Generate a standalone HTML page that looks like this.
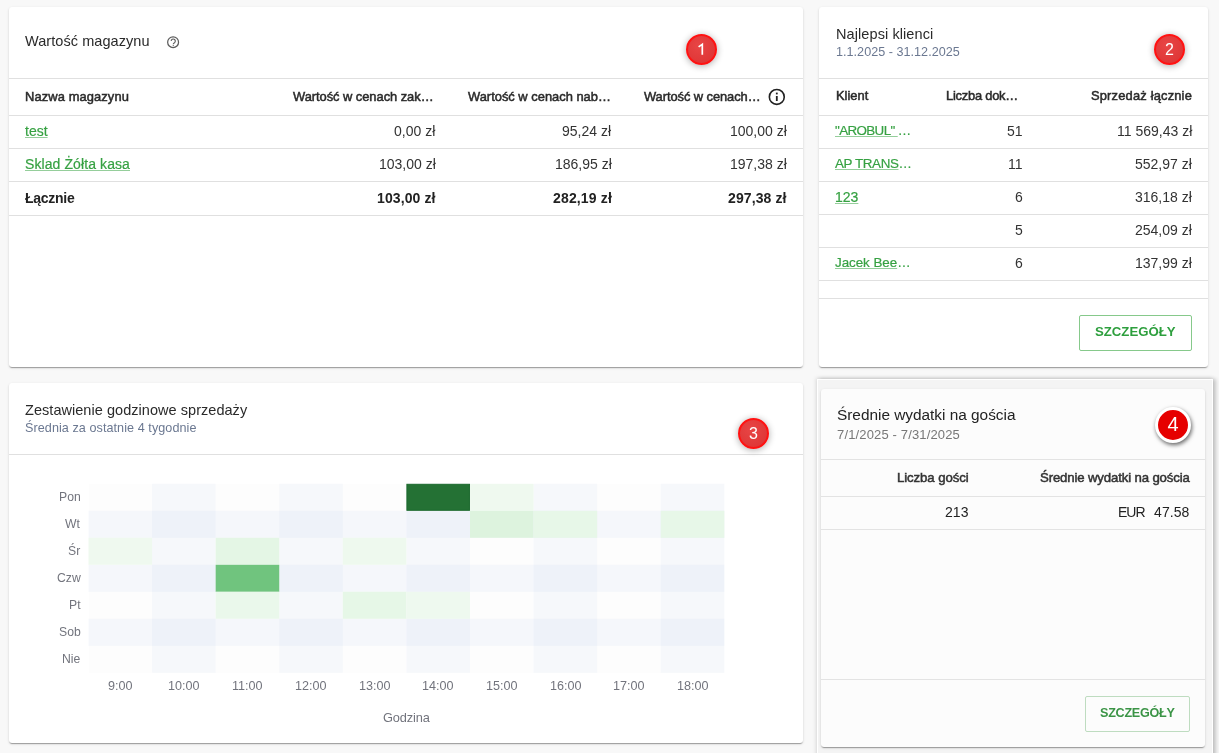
<!DOCTYPE html>
<html><head><meta charset="utf-8"><style>
html,body{margin:0;padding:0}
body{width:1219px;height:753px;overflow:hidden;background:#f8f8f8;position:relative;font-family:'Liberation Sans', sans-serif}
.card{position:absolute;background:#fff;border-radius:3px;box-shadow:0 2px 1px -1px rgba(0,0,0,.2),0 1px 1px 0 rgba(0,0,0,.14),0 1px 3px 0 rgba(0,0,0,.12)}
.tx{position:absolute;white-space:pre;will-change:transform}
.lk{text-decoration:underline;text-decoration-color:rgba(62,165,72,.55);text-underline-offset:1px;text-decoration-thickness:1px}
.hl{position:absolute;height:1px}
.hc{position:absolute}
.bd{position:absolute;border-radius:50%;background:radial-gradient(circle at 40% 35%,#e84545,#dc3232);border:2px solid #ff1212;box-sizing:border-box;box-shadow:0 1px 7px rgba(0,0,0,.33);color:#fff;font-size:16px;text-align:center}
.bd span{position:absolute;left:0;right:0;top:50%;transform:translateY(-50%);will-change:transform;line-height:16px;margin-top:0.5px}
.btn{position:absolute;box-sizing:border-box;border:1px solid #86c98b;border-radius:2px}
</style></head><body>
<div class="card" style="left:9px;top:7px;width:794px;height:360px"></div>
<div class="card" style="left:819px;top:7px;width:389px;height:360px"></div>
<div class="card" style="left:9px;top:383px;width:794px;height:360px"></div>
<div style="position:absolute;left:817px;top:379px;width:396px;height:380px;background:#f4f4f4;border:1px solid #fff;border-bottom:0;box-sizing:border-box;box-shadow:-1px -1px 4px rgba(0,0,0,.13),3px 0 4px rgba(0,0,0,.2)"></div>
<div class="card" style="left:821px;top:389px;width:384px;height:358px;background:#fcfcfc"></div>
<div class="hl" style="left:9px;top:78px;width:794px;background:#e0e0e0"></div><div class="hl" style="left:9px;top:115px;width:794px;background:#e0e0e0"></div><div class="hl" style="left:9px;top:148px;width:794px;background:#e0e0e0"></div><div class="hl" style="left:9px;top:181px;width:794px;background:#e0e0e0"></div><div class="hl" style="left:9px;top:215px;width:794px;background:#e0e0e0"></div><div class="hl" style="left:819px;top:78px;width:389px;background:#e0e0e0"></div><div class="hl" style="left:819px;top:115px;width:389px;background:#e0e0e0"></div><div class="hl" style="left:819px;top:148px;width:389px;background:#e0e0e0"></div><div class="hl" style="left:819px;top:181px;width:389px;background:#e0e0e0"></div><div class="hl" style="left:819px;top:214px;width:389px;background:#e0e0e0"></div><div class="hl" style="left:819px;top:247px;width:389px;background:#e0e0e0"></div><div class="hl" style="left:819px;top:280px;width:389px;background:#e0e0e0"></div><div class="hl" style="left:819px;top:298px;width:389px;background:#e0e0e0"></div><div class="hl" style="left:9px;top:454px;width:794px;background:#e0e0e0"></div><div class="hl" style="left:821px;top:459px;width:384px;background:#e3e3e3"></div><div class="hl" style="left:821px;top:496px;width:384px;background:#e3e3e3"></div><div class="hl" style="left:821px;top:529px;width:384px;background:#e3e3e3"></div><div class="hl" style="left:821px;top:679px;width:384px;background:#e3e3e3"></div>
<svg style="position:absolute;left:0;top:0" width="1219" height="753"><rect x="88.50" y="483.8" width="63.58" height="189.00" fill="rgb(250,250,250)" fill-opacity="0.2"/><rect x="152.08" y="483.8" width="63.58" height="189.00" fill="rgb(210,219,238)" fill-opacity="0.2"/><rect x="215.66" y="483.8" width="63.58" height="189.00" fill="rgb(250,250,250)" fill-opacity="0.2"/><rect x="279.24" y="483.8" width="63.58" height="189.00" fill="rgb(210,219,238)" fill-opacity="0.2"/><rect x="342.82" y="483.8" width="63.58" height="189.00" fill="rgb(250,250,250)" fill-opacity="0.2"/><rect x="406.40" y="483.8" width="63.58" height="189.00" fill="rgb(210,219,238)" fill-opacity="0.2"/><rect x="469.98" y="483.8" width="63.58" height="189.00" fill="rgb(250,250,250)" fill-opacity="0.2"/><rect x="533.56" y="483.8" width="63.58" height="189.00" fill="rgb(210,219,238)" fill-opacity="0.2"/><rect x="597.14" y="483.8" width="63.58" height="189.00" fill="rgb(250,250,250)" fill-opacity="0.2"/><rect x="660.72" y="483.8" width="63.58" height="189.00" fill="rgb(210,219,238)" fill-opacity="0.2"/><rect x="88.5" y="483.80" width="635.80" height="27.00" fill="rgb(250,250,250)" fill-opacity="0.2"/><rect x="88.5" y="510.80" width="635.80" height="27.00" fill="rgb(210,219,238)" fill-opacity="0.2"/><rect x="88.5" y="537.80" width="635.80" height="27.00" fill="rgb(250,250,250)" fill-opacity="0.2"/><rect x="88.5" y="564.80" width="635.80" height="27.00" fill="rgb(210,219,238)" fill-opacity="0.2"/><rect x="88.5" y="591.80" width="635.80" height="27.00" fill="rgb(250,250,250)" fill-opacity="0.2"/><rect x="88.5" y="618.80" width="635.80" height="27.00" fill="rgb(210,219,238)" fill-opacity="0.2"/><rect x="88.5" y="645.80" width="635.80" height="27.00" fill="rgb(250,250,250)" fill-opacity="0.2"/><rect x="406.90" y="484.30" width="62.58" height="26.00" fill="#247134" stroke="#1c6a2d" stroke-width="1"/><rect x="469.98" y="483.80" width="63.58" height="27.00" fill="#eff9ef"/><rect x="469.98" y="510.80" width="63.58" height="27.00" fill="#ddf3de"/><rect x="533.56" y="510.80" width="63.58" height="27.00" fill="#e7f7e8"/><rect x="660.72" y="510.80" width="63.58" height="27.00" fill="#e7f7e8"/><rect x="88.50" y="537.80" width="63.58" height="27.00" fill="#eff9ef"/><rect x="215.66" y="537.80" width="63.58" height="27.00" fill="#e4f6e5"/><rect x="342.82" y="537.80" width="63.58" height="27.00" fill="#eef9ee"/><rect x="215.66" y="564.80" width="63.58" height="27.00" fill="#70c47e"/><rect x="215.66" y="591.80" width="63.58" height="27.00" fill="#eaf8eb"/><rect x="342.82" y="591.80" width="63.58" height="27.00" fill="#e6f7e7"/><rect x="406.40" y="591.80" width="63.58" height="27.00" fill="#eef9ef"/></svg>

<svg style="position:absolute;left:0;top:0" width="1219" height="753">
<circle cx="173.1" cy="42.2" r="5.45" fill="none" stroke="#5c5c5c" stroke-width="1.25"/>
<path d="M171.2 41.1 A2.05 2.05 0 1 1 174.5 42.7 C173.7 43.2 173.25 43.5 173.25 44.3" fill="none" stroke="#5c5c5c" stroke-width="1.15"/>
<circle cx="173.25" cy="45.6" r="0.65" fill="#5c5c5c"/>
<circle cx="776.8" cy="96.9" r="7.45" fill="none" stroke="#222" stroke-width="1.6"/>
<rect x="775.9" y="92.6" width="1.8" height="1.8" fill="#222"/>
<rect x="775.9" y="96" width="1.8" height="5" fill="#222"/>
</svg>
<div class="btn" style="left:1079px;top:315px;width:113px;height:36px"></div>
<div class="btn" style="left:1085px;top:696px;width:105px;height:35.5px;border-color:#bedcc0"></div>
<div class="bd" style="left:685.5px;top:33.5px;width:31px;height:31px"><svg style="position:absolute;left:-2px;top:-2px" width="31" height="31"><path d="M12.6 12.9 L16.3 10.3 L16.3 20.8" fill="none" stroke="#fff" stroke-width="1.7"/></svg></div>
<div class="bd" style="left:1153.5px;top:33.5px;width:31px;height:31px"><span>2</span></div>
<div class="bd" style="left:737.5px;top:417.5px;width:31px;height:31px"><span>3</span></div>
<div class="bd" style="left:1155px;top:407px;width:36px;height:36px;background:#e60000;border:3.5px solid #fff;box-shadow:1px 2px 4px rgba(0,0,0,.6)"><span style="font-size:20px;line-height:20px;margin-top:-1.5px">4</span></div>
<div class="tx" style="left:25.00px;top:32.68px;font-size:14.5px;line-height:17.40px;color:#2a2a2a;letter-spacing:0.059px;">Wartość magazynu</div><div class="tx" style="left:25.00px;top:88.89px;font-size:12.9px;line-height:15.48px;color:#2a2a2a;-webkit-text-stroke:0.5px currentColor;letter-spacing:0.109px;">Nazwa magazynu</div><div class="tx" style="left:293.00px;top:88.89px;font-size:12.9px;line-height:15.48px;color:#2a2a2a;-webkit-text-stroke:0.5px currentColor;letter-spacing:-0.042px;">Wartość w cenach zak…</div><div class="tx" style="left:468.00px;top:88.89px;font-size:12.9px;line-height:15.48px;color:#2a2a2a;-webkit-text-stroke:0.5px currentColor;">Wartość w cenach nab…</div><div class="tx" style="left:644.00px;top:88.89px;font-size:12.9px;line-height:15.48px;color:#2a2a2a;-webkit-text-stroke:0.5px currentColor;letter-spacing:-0.073px;">Wartość w cenach…</div><div class="tx" style="left:25.00px;top:122.65px;font-size:14px;line-height:16.80px;color:#36a142;-webkit-text-stroke:0.2px currentColor;"><span class="lk">test</span></div><div class="tx" style="left:25.00px;top:155.55px;font-size:14px;line-height:16.80px;color:#36a142;-webkit-text-stroke:0.2px currentColor;letter-spacing:0.094px;"><span class="lk">Sklad Żółta kasa</span></div><div class="tx" style="left:25.00px;top:189.55px;font-size:14px;line-height:16.80px;color:#222;font-weight:700;letter-spacing:-0.266px;">Łącznie</div><div class="tx" style="left:394.25px;top:122.65px;font-size:14px;line-height:16.80px;color:#333;">0,00 zł</div><div class="tx" style="left:562.45px;top:122.65px;font-size:14px;line-height:16.80px;color:#333;">95,24 zł</div><div class="tx" style="left:729.67px;top:122.65px;font-size:14px;line-height:16.80px;color:#333;">100,00 zł</div><div class="tx" style="left:378.67px;top:155.55px;font-size:14px;line-height:16.80px;color:#333;">103,00 zł</div><div class="tx" style="left:554.67px;top:155.55px;font-size:14px;line-height:16.80px;color:#333;">186,95 zł</div><div class="tx" style="left:729.67px;top:155.55px;font-size:14px;line-height:16.80px;color:#333;">197,38 zł</div><div class="tx" style="left:377.00px;top:189.55px;font-size:14px;line-height:16.80px;color:#222;font-weight:700;letter-spacing:0.099px;">103,00 zł</div><div class="tx" style="left:552.50px;top:189.55px;font-size:14px;line-height:16.80px;color:#222;font-weight:700;letter-spacing:0.155px;">282,19 zł</div><div class="tx" style="left:728.00px;top:189.55px;font-size:14px;line-height:16.80px;color:#222;font-weight:700;letter-spacing:0.099px;">297,38 zł</div><div class="tx" style="left:835.70px;top:25.68px;font-size:14.5px;line-height:17.40px;color:#2a2a2a;letter-spacing:0.087px;">Najlepsi klienci</div><div class="tx" style="left:835.70px;top:44.97px;font-size:12.6px;line-height:15.12px;color:#6b7891;letter-spacing:0.026px;">1.1.2025 - 31.12.2025</div><div class="tx" style="left:835.50px;top:88.39px;font-size:12.9px;line-height:15.48px;color:#2a2a2a;-webkit-text-stroke:0.5px currentColor;">Klient</div><div class="tx" style="left:946.00px;top:88.39px;font-size:12.9px;line-height:15.48px;color:#2a2a2a;-webkit-text-stroke:0.5px currentColor;letter-spacing:-0.230px;">Liczba dok…</div><div class="tx" style="left:1091.30px;top:88.39px;font-size:12.9px;line-height:15.48px;color:#2a2a2a;-webkit-text-stroke:0.5px currentColor;letter-spacing:0.177px;">Sprzedaż łącznie</div><div class="tx" style="left:835.30px;top:123.12px;font-size:13.4px;line-height:16.08px;color:#36a142;-webkit-text-stroke:0.2px currentColor;letter-spacing:-0.619px;"><span class="lk">"AROBUL" </span>…</div><div class="tx" style="left:1006.92px;top:122.55px;font-size:14px;line-height:16.80px;color:#333;">51</div><div class="tx" style="left:1117.05px;top:122.55px;font-size:14px;line-height:16.80px;color:#333;">11 569,43 zł</div><div class="tx" style="left:835.30px;top:156.12px;font-size:13.4px;line-height:16.08px;color:#36a142;-webkit-text-stroke:0.2px currentColor;letter-spacing:-0.375px;"><span class="lk">AP TRANS</span>…</div><div class="tx" style="left:1007.95px;top:155.55px;font-size:14px;line-height:16.80px;color:#333;">11</div><div class="tx" style="left:1135.47px;top:155.55px;font-size:14px;line-height:16.80px;color:#333;">552,97 zł</div><div class="tx" style="left:835.30px;top:188.55px;font-size:14px;line-height:16.80px;color:#36a142;-webkit-text-stroke:0.2px currentColor;"><span class="lk">123</span></div><div class="tx" style="left:1014.70px;top:188.55px;font-size:14px;line-height:16.80px;color:#333;">6</div><div class="tx" style="left:1135.47px;top:188.55px;font-size:14px;line-height:16.80px;color:#333;">316,18 zł</div><div class="tx" style="left:1014.70px;top:221.55px;font-size:14px;line-height:16.80px;color:#333;">5</div><div class="tx" style="left:1135.47px;top:221.55px;font-size:14px;line-height:16.80px;color:#333;">254,09 zł</div><div class="tx" style="left:835.30px;top:255.12px;font-size:13.4px;line-height:16.08px;color:#36a142;-webkit-text-stroke:0.2px currentColor;letter-spacing:-0.042px;"><span class="lk">Jacek Bee</span>…</div><div class="tx" style="left:1014.70px;top:254.55px;font-size:14px;line-height:16.80px;color:#333;">6</div><div class="tx" style="left:1135.47px;top:254.55px;font-size:14px;line-height:16.80px;color:#333;">137,99 zł</div><div class="tx" style="left:1095.35px;top:324.21px;font-size:13.2px;line-height:15.84px;color:#2e9f3e;font-weight:700;letter-spacing:-0.010px;">SZCZEGÓŁY</div><div class="tx" style="left:24.80px;top:401.88px;font-size:14.5px;line-height:17.40px;color:#2a2a2a;letter-spacing:0.044px;">Zestawienie godzinowe sprzedaży</div><div class="tx" style="left:25.00px;top:420.97px;font-size:12.6px;line-height:15.12px;color:#6b7891;letter-spacing:0.069px;">Średnia za ostatnie 4 tygodnie</div><div class="tx" style="left:58.61px;top:490.05px;font-size:12.2px;line-height:14.64px;color:#72747d;">Pon</div><div class="tx" style="left:65.41px;top:517.05px;font-size:12.2px;line-height:14.64px;color:#72747d;">Wt</div><div class="tx" style="left:68.11px;top:544.05px;font-size:12.2px;line-height:14.64px;color:#72747d;">Śr</div><div class="tx" style="left:56.60px;top:571.05px;font-size:12.2px;line-height:14.64px;color:#72747d;">Czw</div><div class="tx" style="left:68.78px;top:598.05px;font-size:12.2px;line-height:14.64px;color:#72747d;">Pt</div><div class="tx" style="left:58.61px;top:625.05px;font-size:12.2px;line-height:14.64px;color:#72747d;">Sob</div><div class="tx" style="left:62.00px;top:652.05px;font-size:12.2px;line-height:14.64px;color:#72747d;">Nie</div><div class="tx" style="left:108.03px;top:679.07px;font-size:12.6px;line-height:15.12px;color:#72747d;">9:00</div><div class="tx" style="left:168.11px;top:679.07px;font-size:12.6px;line-height:15.12px;color:#72747d;">10:00</div><div class="tx" style="left:232.15px;top:679.07px;font-size:12.6px;line-height:15.12px;color:#72747d;">11:00</div><div class="tx" style="left:295.27px;top:679.07px;font-size:12.6px;line-height:15.12px;color:#72747d;">12:00</div><div class="tx" style="left:358.85px;top:679.07px;font-size:12.6px;line-height:15.12px;color:#72747d;">13:00</div><div class="tx" style="left:422.43px;top:679.07px;font-size:12.6px;line-height:15.12px;color:#72747d;">14:00</div><div class="tx" style="left:486.01px;top:679.07px;font-size:12.6px;line-height:15.12px;color:#72747d;">15:00</div><div class="tx" style="left:549.59px;top:679.07px;font-size:12.6px;line-height:15.12px;color:#72747d;">16:00</div><div class="tx" style="left:613.17px;top:679.07px;font-size:12.6px;line-height:15.12px;color:#72747d;">17:00</div><div class="tx" style="left:676.75px;top:679.07px;font-size:12.6px;line-height:15.12px;color:#72747d;">18:00</div><div class="tx" style="left:383.10px;top:709.88px;font-size:12.8px;line-height:15.36px;color:#72747d;letter-spacing:-0.153px;">Godzina</div><div class="tx" style="left:836.50px;top:406.42px;font-size:15.4px;line-height:18.48px;color:#222;letter-spacing:-0.013px;filter:blur(0.35px);">Średnie wydatki na gościa</div><div class="tx" style="left:836.50px;top:426.70px;font-size:13px;line-height:15.60px;color:#777;letter-spacing:0.150px;filter:blur(0.35px);">7/1/2025 - 7/31/2025</div><div class="tx" style="left:897.00px;top:470.11px;font-size:13.2px;line-height:15.84px;color:#333;-webkit-text-stroke:0.5px currentColor;letter-spacing:-0.090px;filter:blur(0.35px);">Liczba gości</div><div class="tx" style="left:1039.50px;top:470.11px;font-size:13.2px;line-height:15.84px;color:#333;-webkit-text-stroke:0.5px currentColor;letter-spacing:-0.141px;filter:blur(0.35px);">Średnie wydatki na gościa</div><div class="tx" style="left:945.30px;top:504.45px;font-size:14px;line-height:16.80px;color:#222;letter-spacing:0.047px;filter:blur(0.35px);">213</div><div class="tx" style="left:1118.00px;top:504.45px;font-size:14px;line-height:16.80px;color:#222;letter-spacing:-1.021px;filter:blur(0.35px);">EUR</div><div class="tx" style="left:1154.00px;top:504.45px;font-size:14px;line-height:16.80px;color:#222;letter-spacing:0.091px;filter:blur(0.35px);">47.58</div><div class="tx" style="left:1099.95px;top:706.07px;font-size:12.6px;line-height:15.12px;color:#3b9446;font-weight:700;letter-spacing:-0.252px;filter:blur(0.35px);">SZCZEGÓŁY</div>
</body></html>
